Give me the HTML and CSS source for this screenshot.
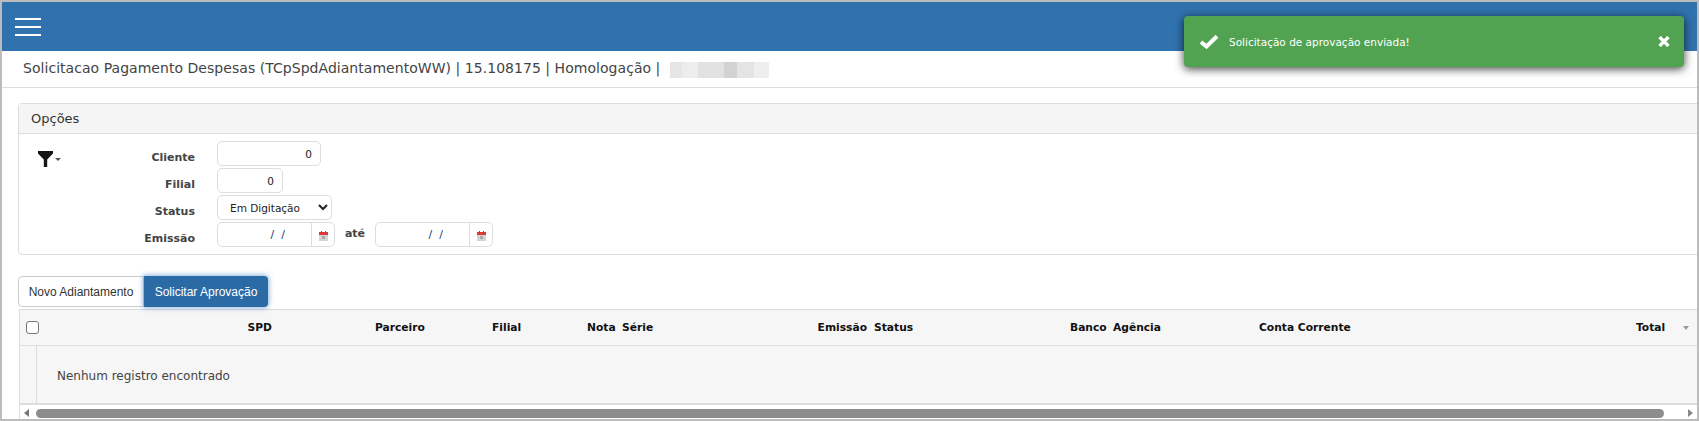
FILE: index.html
```html
<!DOCTYPE html>
<html lang="pt-BR">
<head>
<meta charset="utf-8">
<title>Solicitacao Pagamento Despesas</title>
<link rel="stylesheet" href="styles.css">
</head>
<body>
<div class="frame">
  <header class="topbar">
    <div class="burger"><span></span><span></span><span></span></div>
  </header>
  <div class="titlebar">
    <span>Solicitacao Pagamento Despesas (TCpSpdAdiantamentoWW) | 15.108175 | Homologação |</span>
    <span class="blur"></span>
  </div>
  <main class="content">
    <section class="panel">
      <div class="panel-head">Opções</div>
      <div class="panel-body">
        <div class="filter">
          <svg width="15" height="16" viewBox="0 0 15 16"><path d="M0 0H15V2.5L9.2 8.5V16H5.8V8.5L0 2.5Z" fill="#151515"/></svg>
          <i class="caret"></i>
        </div>
        <div class="form">
          <label class="lbl">Cliente</label>
          <div class="field"><input class="num w-cliente" value="0"></div>
          <label class="lbl">Filial</label>
          <div class="field"><input class="num w-filial" value="0"></div>
          <label class="lbl">Status</label>
          <div class="field"><select class="sel"><option>Em Digitação</option></select></div>
          <label class="lbl">Emissão</label>
          <div class="field">
            <div class="date"><input class="date-in" value="/  /">
              <span class="cal"><svg width="9" height="10" viewBox="0 0 9 10"><rect y="4" width="9" height="6" fill="#d4d4d4"/><rect y="1" width="9" height="3" fill="#e0393c"/><rect x="2" width="1" height="2" fill="#a33"/><rect x="6" width="1" height="2" fill="#a33"/><rect x="3" y="5" width="3" height="3" fill="#aaa"/></svg></span>
            </div>
            <span class="ate">até</span>
            <div class="date"><input class="date-in" value="/  /">
              <span class="cal"><svg width="9" height="10" viewBox="0 0 9 10"><rect y="4" width="9" height="6" fill="#d4d4d4"/><rect y="1" width="9" height="3" fill="#e0393c"/><rect x="2" width="1" height="2" fill="#a33"/><rect x="6" width="1" height="2" fill="#a33"/><rect x="3" y="5" width="3" height="3" fill="#aaa"/></svg></span>
            </div>
          </div>
        </div>
      </div>
    </section>
    <div class="btns">
      <button class="btn">Novo Adiantamento</button>
      <button class="btn primary">Solicitar Aprovação</button>
    </div>
    <section class="grid">
      <div class="grid-head">
        <div class="c-check"><span class="check"></span></div>
        <div class="c-spd">SPD</div>
        <div class="c-par">Parceiro</div>
        <div class="c-fil">Filial</div>
        <div class="c-nota">Nota</div>
        <div class="c-serie">Série</div>
        <div class="c-emi">Emissão</div>
        <div class="c-sta">Status</div>
        <div class="c-ban">Banco</div>
        <div class="c-age">Agência</div>
        <div class="c-con">Conta Corrente</div>
        <div class="c-tot">Total</div>
        <div class="c-arr"><i class="arr-down"></i></div>
      </div>
      <div class="grid-body">
        <div class="gutter"></div>
        <div class="empty">Nenhum registro encontrado</div>
      </div>
      <div class="hscroll">
        <i class="arr-left"></i>
        <div class="thumb"></div>
        <i class="arr-right"></i>
      </div>
    </section>
  </main>
  <div class="toast">
    <svg class="toast-check" width="20" height="15" viewBox="0 0 20 15"><path d="M2 8L7.5 12.5L18 2.2" fill="none" stroke="#fff" stroke-width="4"/></svg>
    <span class="toast-text">Solicitação de aprovação enviada!</span>
    <svg class="toast-x" width="12" height="11" viewBox="0 0 12 11"><path d="M1.5 1L10.5 10M10.5 1L1.5 10" fill="none" stroke="#fff" stroke-width="3.4"/></svg>
  </div>
</div>
</body>
</html>
```
FILE: styles.css
```css
* { box-sizing: border-box; }
html, body { margin: 0; padding: 0; background: #fff; }
body { font-family: "DejaVu Sans", sans-serif; color: #333; }
.frame {
  position: relative;
  width: 1699px;
  height: 421px;
  border: 2px solid #bcbcbc;
  overflow: hidden;
  background: #fff;
}
.topbar {
  height: 49px;
  background: #3072ae;
  display: flex;
  align-items: center;
  padding-left: 13px;
}
.burger { width: 26px; display: flex; flex-direction: column; gap: 6px; margin-top: 1px; }
.burger span { display: block; height: 2px; background: #fff; }
.titlebar {
  height: 37px;
  border-bottom: 1px solid #ddd;
  display: flex;
  align-items: center;
  gap: 10px;
  padding-left: 21px;
  padding-bottom: 2px;
  font-size: 14px;
  letter-spacing: .04px;
  color: #444;
  white-space: nowrap;
}
.blur {
  width: 99px;
  height: 16px;
  margin-top: 3px;
  background: linear-gradient(90deg, #e6e6e6 0 12%, #ededed 12% 28%, #e2e2e2 28% 55%, #d2d2d2 55% 68%, #e4e4e4 68% 85%, #eee 85%);
}
.content { padding: 15px 0 0 16px; width: 1800px; }
.panel { border: 1px solid #ddd; border-radius: 4px; height: 152px; }
.panel-head {
  height: 30px;
  background: #f5f5f5;
  border-bottom: 1px solid #ddd;
  padding: 7px 0 0 12px;
  font-size: 13px;
  color: #333;
}
.panel-body { display: flex; padding-left: 19px; padding-top: 7px; }
.filter { width: 61px; display: flex; align-items: flex-start; padding-top: 10px; gap: 2px; }
.caret { margin-top: 7px; border-left: 3.5px solid transparent; border-right: 3.5px solid transparent; border-top: 3px solid #555; }
.form { display: grid; grid-template-columns: 96px auto; column-gap: 22px; row-gap: 2px; justify-content: start; }
.lbl { font-weight: bold; font-size: 11px; color: #444; text-align: right; height: 25px; line-height: 33px; }
.field { display: flex; height: 25px; align-items: stretch; }
input, select { font-family: "DejaVu Sans", sans-serif; font-size: 10.5px; color: #222; }
.num { border: 1px solid #ddd; border-radius: 5px; text-align: right; padding: 0 8px; outline: 0; }
.w-cliente { width: 104px; }
.w-filial { width: 66px; }
.sel { width: 115px; border: 1px solid #ddd; border-radius: 5px; background: #fff; padding-left: 8px; outline: 0; }
.date { display: flex; width: 118px; border: 1px solid #ddd; border-radius: 5px; overflow: hidden; }
.date-in { width: 93px; border: 0; outline: 0; text-align: right; padding: 0 26px 0 0; background: transparent; color: #1a3a70; font-size: 11px; }
.cal { flex: 1; border-left: 1px solid #ddd; display: flex; align-items: center; justify-content: center; padding-top: 3px; }
.ate { width: 40px; text-align: center; font-weight: bold; font-size: 11px; color: #444; line-height: 23px; }
.btns { display: flex; margin-top: 21px; height: 31px; }
button { font-family: "Liberation Sans", sans-serif; font-size: 12px; }
.btn { width: 126px; border: 1px solid #ccc; border-radius: 4px 0 0 4px; background: #fff; color: #333; padding: 0; }
.btn.primary { width: 124px; background: #2a6ba6; border: 0; border-radius: 0 4px 4px 0; color: #fff; box-shadow: 0 0 5px 1px rgba(60,130,200,.6); position: relative; }
.grid { margin: 2px 0 0 1px; background: #f6f6f6; border-left: 1px solid #ddd; border-top: 1px solid #ddd; }
.grid-head {
  height: 36px;
  display: grid;
  grid-template-columns: 30px 222px 220px 95px 35px 100px 145px 203px 43px 146px 377px 30px 60px;
  align-items: center;
  border-bottom: 1px solid #ddd;
  font-weight: bold;
  font-size: 10.7px;
  color: #111;
  white-space: nowrap;
}
.check { display: block; width: 13px; height: 13px; margin-left: 6px; border: 1px solid #777; border-radius: 3px; background: #fff; }
.c-spd, .c-emi { text-align: right; }
.c-par { padding-left: 103px; }
.c-sta { padding-left: 7px; }
.c-arr { padding-left: 17px; display: flex; }
.arr-down { border-left: 3.5px solid transparent; border-right: 3.5px solid transparent; border-top: 4px solid #999; }
.grid-body { height: 59px; display: flex; border-bottom: 2px solid #ddd; }
.gutter { width: 17px; border-right: 1px solid #ddd; }
.empty { padding: 23px 0 0 20px; font-size: 12px; color: #444; }
.hscroll { height: 14px; background: #fff; display: flex; align-items: center; width: 1677px; padding-top: 2px; }
.arr-left { margin-left: 4px; border-top: 4px solid transparent; border-bottom: 4px solid transparent; border-right: 5px solid #777; }
.thumb { margin-left: 7px; width: 1628px; height: 9px; border-radius: 5px; background: #8c8c8c; }
.arr-right { margin-left: 24px; border-top: 4px solid transparent; border-bottom: 4px solid transparent; border-left: 5px solid #888; }
.toast {
  position: absolute;
  left: 1182px;
  top: 14px;
  width: 500px;
  height: 51px;
  background: #51a351;
  border-radius: 4px;
  box-shadow: 0 2px 10px rgba(0,0,0,.75);
  display: flex;
  align-items: center;
  padding-left: 15px;
  color: #fff;
}
.toast-check { flex: none; }
.toast-text { margin-left: 10px; font-size: 10.5px; }
.toast-x { position: absolute; right: 14px; top: 20px; }
```
